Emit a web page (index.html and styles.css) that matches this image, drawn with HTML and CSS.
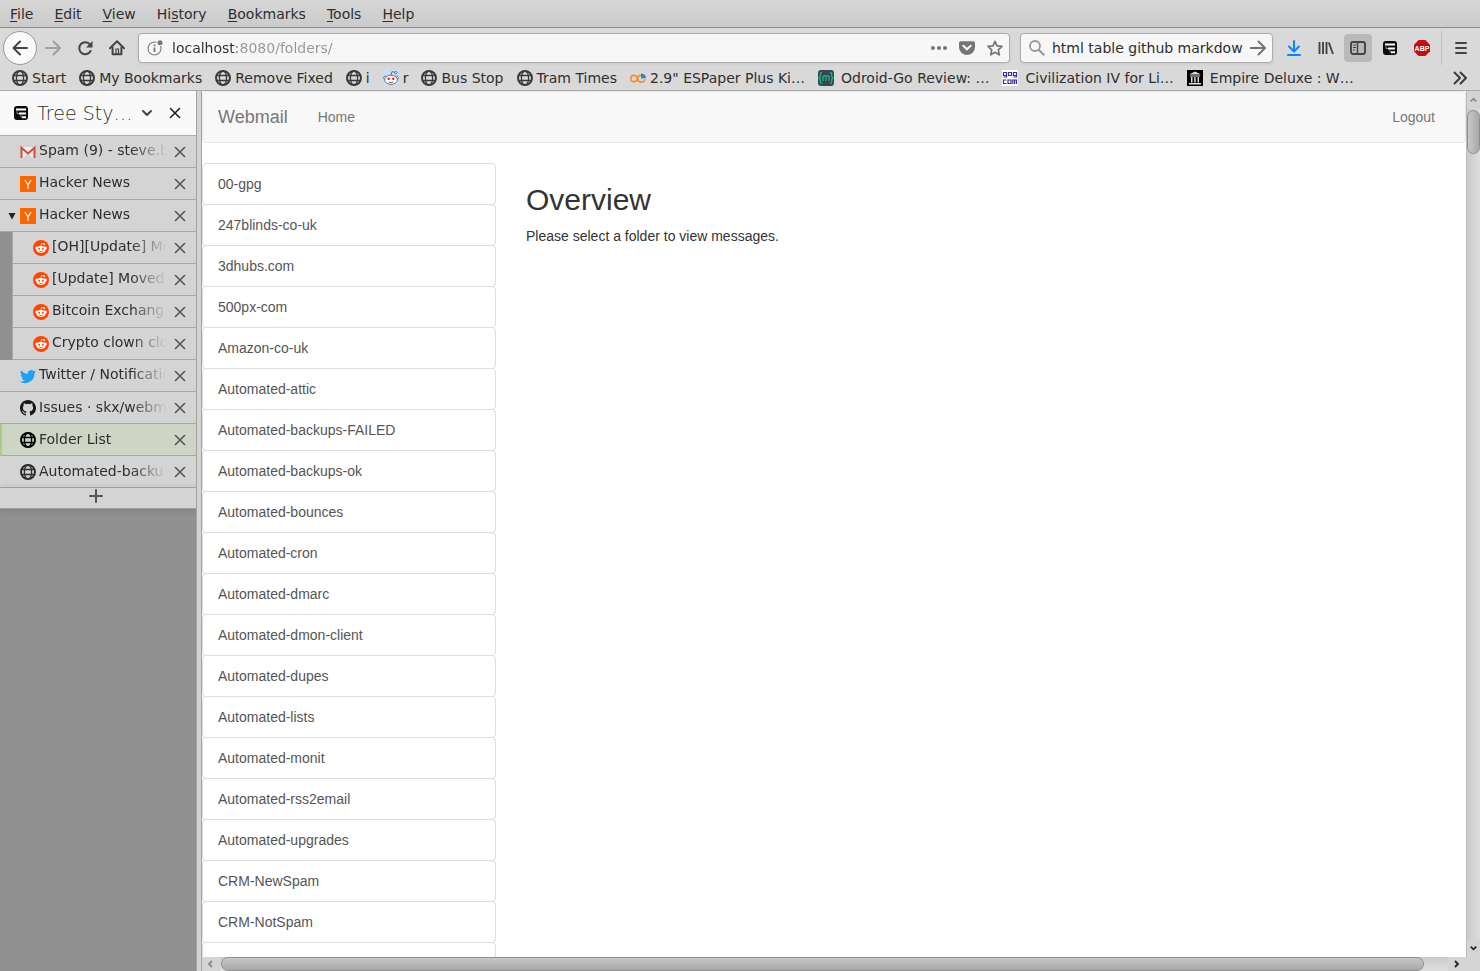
FILE: index.html
```html
<!DOCTYPE html>
<html lang="en">
<head>
<meta charset="utf-8">
<title>Folder List</title>
<link rel="stylesheet" href="styles.css">
</head>
<body>
<svg class="defs" aria-hidden="true">
  <symbol id="globe" viewBox="0 0 16 16"><g fill="none" stroke="currentColor"><circle cx="8" cy="8" r="7" stroke-width="2"/><ellipse cx="8" cy="8" rx="3.6" ry="7" stroke-width="1.3"/><path d="M1 5.5h14M1 10.5h14" stroke-width="1.3"/></g></symbol>
  <symbol id="close" viewBox="0 0 16 16"><path d="M3.5 3.500l9 9m0-9l-9 9" stroke="currentColor" stroke-width="1.600" stroke-linecap="round"/></symbol>
  <symbol id="hn" viewBox="0 0 16 16"><path fill="#f60" d="M0 0h16v16H0z"/><path d="M5 4l3 4.800L11 4M8 8.500V13" fill="none" stroke="#fff" stroke-width="1.200"/></symbol>
  <symbol id="reddit" viewBox="0 0 16 16"><circle cx="8" cy="8" r="8" fill="#ff4500"/><ellipse cx="8" cy="9.400" rx="4.600" ry="3.300" fill="#fff"/><circle cx="3.500" cy="7.900" r="1.300" fill="#fff"/><circle cx="12.500" cy="7.900" r="1.300" fill="#fff"/><path d="M8 6.400l.7-3 2.200.5" fill="none" stroke="#fff" stroke-width=".8"/><circle cx="11.200" cy="4" r="1" fill="#fff"/><circle cx="6.200" cy="8.700" r=".95" fill="#ff4500"/><circle cx="9.800" cy="8.700" r=".95" fill="#ff4500"/><path d="M6 10.900q2 1.300 4 0" stroke="#ff4500" stroke-width=".7" fill="none"/></symbol>
  <symbol id="tst" viewBox="0 0 16 16"><rect x="1" y="1" width="14" height="14" rx="3" fill="#0a0a0a"/><path d="M3 3.500h10v2H3zM6 7.500h7v2H6zM9 11.200h4v2H9z" fill="#fff"/><path d="M4 6v2.600h2M8 9.500V12h1" fill="none" stroke="#bbb" stroke-width=".7"/></symbol>
</svg>

<header class="chrome">
  <nav class="menubar" aria-label="Menu bar">
    <button><u>F</u>ile</button><button><u>E</u>dit</button><button><u>V</u>iew</button><button>Hi<u>s</u>tory</button><button><u>B</u>ookmarks</button><button><u>T</u>ools</button><button><u>H</u>elp</button>
  </nav>
  <div class="toolbar">
    <button class="tool back" aria-label="Back"><svg class="ico" viewBox="0 0 16 16"><path d="M8 1.500L1.500 8 8 14.500M2 8h13" class="line"/></svg></button>
    <button class="tool dim" aria-label="Forward"><svg class="ico" viewBox="0 0 16 16"><path d="M8.500 1.500L15 8l-6.500 6.500M14 8H1" class="line"/></svg></button>
    <button class="tool" aria-label="Reload"><svg class="ico" viewBox="0 0 16 16"><path d="M13 4.500A6 6 0 1 0 13.600 11" class="line"/><path d="M15.500 1v6.500H9z" fill="currentColor"/></svg></button>
    <button class="tool" aria-label="Home"><svg class="ico" viewBox="0 0 16 16"><path d="M1 8.200L8 1.300l7 6.900" class="line"/><path d="M3.600 7.500v6.700h8.800V7.500" class="line"/><path d="M7 9h2.500v5H7z" fill="none" stroke="currentColor" stroke-width="1.200"/></svg></button>
    <div class="field url">
      <svg class="ico info" viewBox="0 0 16 16"><circle cx="7.500" cy="8.500" r="6.500" fill="none" stroke="currentColor" stroke-width="1.100"/><path d="M7.500 7.500v4.500M7.500 4.500v1.800" stroke="currentColor" stroke-width="1.800"/><circle cx="13" cy="2.700" r="3.600" fill="#f7f7f7"/><circle cx="13" cy="2.700" r="2.500" fill="currentColor"/></svg>
      <input class="address" type="text" aria-label="Address" value="localhost:8080/folders/">
      <button class="inner" aria-label="Page actions"><svg class="ico" viewBox="0 0 16 16"><g fill="currentColor"><circle cx="2" cy="8" r="2"/><circle cx="8" cy="8" r="2"/><circle cx="14" cy="8" r="2"/></g></svg></button>
      <button class="inner" aria-label="Save to Pocket"><svg class="ico" viewBox="0 0 16 16"><path d="M1.500 1.200h13q1.500 0 1.500 1.500V7A8 8 0 0 1 0 7V2.700q0-1.500 1.500-1.500z" fill="currentColor"/><path d="M4.300 5.800L8 9.300l3.700-3.500" fill="none" stroke="#f7f7f7" stroke-width="2" stroke-linecap="round"/></svg></button>
      <button class="inner" aria-label="Bookmark this page"><svg class="ico" viewBox="0 0 16 16"><path d="M8 1.300l2 4.600 5 .5-3.700 3.400 1 5L8 12.300 3.700 14.800l1-5L1 6.400l5-.5z" fill="none" stroke="currentColor" stroke-width="1.700" stroke-linejoin="round"/></svg></button>
    </div>
    <div class="field search">
      <svg class="ico" viewBox="0 0 16 16"><circle cx="6" cy="6" r="5" fill="none" stroke="#999" stroke-width="1.800"/><path d="M9.700 9.700l5.500 5.500" stroke="#999" stroke-width="2.200"/></svg>
      <input type="text" aria-label="Search" value="html table github markdow">
      <button class="inner go" aria-label="Search"><svg class="ico" viewBox="0 0 16 16"><path d="M8.500 1.500L15 8l-6.500 6.500M14.500 8H0" class="line"/></svg></button>
    </div>
    <div class="tools">
      <button class="tool blue" aria-label="Downloads"><svg class="ico" viewBox="0 0 16 16"><path d="M8 1v10M3 6.500l5 5 5-5M2 15h12" class="line"/></svg></button>
      <button class="tool" aria-label="Library"><svg class="ico" viewBox="0 0 16 16"><path d="M1.500 2v12M5 2v12M8.500 2v12M10.800 2.500L15 14" fill="none" stroke="currentColor" stroke-width="1.900"/></svg></button>
      <button class="tool" aria-label="Sidebars"><span class="pressed"><svg class="ico" viewBox="0 0 16 16"><rect x="1" y="2" width="14" height="12" rx="2" fill="none" stroke="currentColor" stroke-width="1.900"/><path d="M7.500 2v12" stroke="currentColor" stroke-width="1.500"/><path d="M3 5h3M3 7.500h3M3 10h2" stroke="currentColor"/></svg></span></button>
      <button class="tool" aria-label="Tree Style Tab"><svg class="ico"><use href="#tst"/></svg></button>
      <button class="tool" aria-label="Adblock Plus"><svg class="ico" viewBox="0 0 16 16"><path d="M4.700 0h6.600L16 4.700v6.600L11.300 16H4.700L0 11.300V4.700z" fill="#c70d0d"/><text x="8" y="10.500" class="abp">ABP</text></svg></button>
    </div>
    <button class="tool menu" aria-label="Open menu"><svg class="ico" viewBox="0 0 16 16"><path d="M3 3h10M3 8h10M3 13h10" class="line"/></svg></button>
  </div>
  <nav class="bookmarks" aria-label="Bookmarks">
    <a href="#"><svg class="ico"><use href="#globe"/></svg>Start</a>
    <a href="#"><svg class="ico"><use href="#globe"/></svg>My Bookmarks</a>
    <a href="#"><svg class="ico"><use href="#globe"/></svg>Remove Fixed</a>
    <a href="#"><svg class="ico"><use href="#globe"/></svg>i</a>
    <a href="#"><svg class="ico" viewBox="0 0 16 16"><path fill="#c5e0fa" d="M0 0h16v16H0z"/><g fill="#fff" stroke="#555" stroke-width=".8"><circle cx="2.300" cy="7.800" r="1.700"/><circle cx="13.700" cy="7.800" r="1.700"/><path d="M8 5.500l1-4 3.200 1" fill="none"/><circle cx="12.800" cy="2.700" r="1.200"/><ellipse cx="8" cy="9.800" rx="6.300" ry="4.600"/></g><circle cx="5.700" cy="8.800" r="1.300" fill="#f22"/><circle cx="10.300" cy="8.800" r="1.300" fill="#f22"/><path d="M5.500 12q2.500 1.500 5 0" fill="none" stroke="#444" stroke-width=".8"/></svg>r</a>
    <a href="#"><svg class="ico"><use href="#globe"/></svg>Bus Stop</a>
    <a href="#"><svg class="ico"><use href="#globe"/></svg>Tram Times</a>
    <a href="#"><svg class="ico" viewBox="0 0 16 16"><g fill="none" stroke="#f39034" stroke-width="1.700"><circle cx="4" cy="8.500" r="3.200"/><path d="M11 5.200a3.500 3.500 0 1 0 3.800 4"/></g><path d="M11 8.500V3.500a5 5 0 0 1 5 4.500z" fill="#2389c9"/></svg>2.9" ESPaper Plus Ki…</a>
    <a href="#" class="wide"><svg class="ico" viewBox="0 0 16 16"><rect width="16" height="16" rx="3" fill="#3b4558"/><g fill="none" stroke="#19b67c" stroke-width="1.300"><path d="M4 2.500q-1.700 0-1.700 1.700v2.300L1 8l1.300 1.500v2.300q0 1.700 1.700 1.700M12 2.500q1.700 0 1.700 1.700v2.300L15 8l-1.300 1.500v2.300q0 1.700-1.700 1.700M5 11V6.500q1.500-1.500 3 0V11M8 6.500q1.500-1.500 3 0V11"/></g></svg>Odroid-Go Review: …</a>
    <a href="#" class="wide"><svg class="ico" viewBox="0 0 16 16"><path fill="#fff" d="M0 0h16v16H0z"/><path d="M4.500 5.500h-3v-3h3v4.500h-3M9.500 2.500v3h-3v-3zM14.500 5.500h-3v-3h3v4.500h-3M4.500 10h-3v3.500h3M9 10v3.500H6V10zM10.800 14v-4h3.700v4M12.600 10v4" fill="none" stroke="#45279b" stroke-width="1.200"/></svg>Civilization IV for Li…</a>
    <a href="#" class="wide"><svg class="ico" viewBox="0 0 16 16"><path d="M0 0h16v16H0z"/><path d="M2 4.500L8 1.500l6 3zM3 5.500h10v1H3zM4 7h1.500v5.500H4zM7.200 7h1.500v5.500H7.200zM10.500 7H12v5.500h-1.500zM2 13h12v1.500H2z" fill="#ddd"/></svg>Empire Deluxe : W…</a>
    <button class="more" aria-label="More bookmarks"><svg class="ico" viewBox="0 0 16 16"><path d="M2.500 2.500L8 8l-5.500 5.500M8.500 2.500L14 8l-5.500 5.500" class="line"/></svg></button>
  </nav>
</header>

<div class="main">
  <aside class="sidebar">
    <div class="sidehead">
      <svg class="ico"><use href="#tst"/></svg>
      <button class="title">Tree Sty…</button>
      <svg class="ico chev" viewBox="0 0 16 16"><path d="M4 6l4 4 4-4" class="line"/></svg>
      <button class="x dark" aria-label="Close sidebar"><svg class="ico"><use href="#close"/></svg></button>
    </div>
    <ul class="tabs">
      <li><svg class="ico" viewBox="0 0 16 16"><path d="M1 3h14v11H1z" fill="#eee"/><path d="M3 14l5-5 5 5z" fill="#d5d5d5"/><path d="M1.500 14V3.800L8 9.500l6.500-5.700V14" fill="none" stroke="#d54b3d" stroke-width="2"/></svg><a href="#">Spam (9) - steve.b</a><button class="x" aria-label="Close tab"><svg class="ico"><use href="#close"/></svg></button></li>
      <li><svg class="ico"><use href="#hn"/></svg><a href="#">Hacker News</a><button class="x" aria-label="Close tab"><svg class="ico"><use href="#close"/></svg></button></li>
      <li><button class="twisty" aria-label="Collapse tree"><svg viewBox="0 0 8 8"><path d="M.5 1h7L4 7.500z" fill="#222"/></svg></button><svg class="ico"><use href="#hn"/></svg><a href="#">Hacker News</a><button class="x" aria-label="Close tab"><svg class="ico"><use href="#close"/></svg></button></li>
      <li class="child"><svg class="ico"><use href="#reddit"/></svg><a href="#">[OH][Update] Mo</a><button class="x" aria-label="Close tab"><svg class="ico"><use href="#close"/></svg></button></li>
      <li class="child"><svg class="ico"><use href="#reddit"/></svg><a href="#">[Update] Moved</a><button class="x" aria-label="Close tab"><svg class="ico"><use href="#close"/></svg></button></li>
      <li class="child"><svg class="ico"><use href="#reddit"/></svg><a href="#">Bitcoin Exchang</a><button class="x" aria-label="Close tab"><svg class="ico"><use href="#close"/></svg></button></li>
      <li class="child"><svg class="ico"><use href="#reddit"/></svg><a href="#">Crypto clown clo</a><button class="x" aria-label="Close tab"><svg class="ico"><use href="#close"/></svg></button></li>
      <li><svg class="ico" viewBox="0 0 16 16"><path fill="#1da1f2" d="M16 3.500a6.600 6.600 0 0 1-1.900.5 3.300 3.300 0 0 0 1.400-1.800 6.600 6.600 0 0 1-2.100.8 3.300 3.300 0 0 0-5.600 3A9.300 9.300 0 0 1 1.100 2.600a3.300 3.300 0 0 0 1 4.400 3.300 3.300 0 0 1-1.500-.4 3.300 3.300 0 0 0 2.700 3.200 3.300 3.300 0 0 1-1.500.1 3.300 3.300 0 0 0 3.100 2.300A6.600 6.600 0 0 1 0 13.500a9.300 9.300 0 0 0 14.400-8.300A6.700 6.700 0 0 0 16 3.500z"/></svg><a href="#">Twitter / Notificatio</a><button class="x" aria-label="Close tab"><svg class="ico"><use href="#close"/></svg></button></li>
      <li class="low"><svg class="ico" viewBox="0 0 16 16"><path fill="#191717" d="M8 0C3.580 0 0 3.580 0 8c0 3.540 2.290 6.530 5.470 7.590.4.070.55-.17.55-.38 0-.19-.01-.82-.01-1.490-2.010.37-2.530-.49-2.690-.94-.09-.23-.48-.94-.82-1.130-.28-.15-.68-.52-.01-.53.63-.01 1.080.58 1.230.82.72 1.210 1.870.87 2.330.66.07-.52.28-.87.51-1.070-1.780-.2-3.640-.89-3.640-3.950 0-.87.31-1.590.82-2.150-.08-.2-.36-1.020.08-2.120 0 0 .67-.21 2.200.82a7.500 7.500 0 0 1 4 0c1.530-1.040 2.200-.82 2.200-.82.44 1.100.16 1.920.08 2.120.51.56.82 1.270.82 2.150 0 3.070-1.870 3.750-3.650 3.950.29.25.54.73.54 1.480 0 1.070-.01 1.930-.01 2.200 0 .21.15.46.55.38A8 8 0 0 0 8 0z"/></svg><a href="#">Issues · skx/webma</a><button class="x" aria-label="Close tab"><svg class="ico"><use href="#close"/></svg></button></li>
      <li class="low active"><svg class="ico black"><use href="#globe"/></svg><a href="#">Folder List</a><button class="x" aria-label="Close tab"><svg class="ico"><use href="#close"/></svg></button></li>
      <li class="low"><svg class="ico"><use href="#globe"/></svg><a href="#">Automated-backu</a><button class="x" aria-label="Close tab"><svg class="ico"><use href="#close"/></svg></button></li>
    </ul>
    <button class="newtab" aria-label="New tab"><svg class="ico" viewBox="0 0 16 16"><path d="M8 2v12M2 8h12" class="line"/></svg></button>
  </aside>
  <div class="splitter"></div>
  <div class="view">
    <div class="page">
      <nav class="navbar">
        <a href="#" class="brand">Webmail</a><a href="#">Home</a><a href="#" class="logout">Logout</a>
      </nav>
      <div class="row">
        <div class="folders">
          <a href="#">00-gpg</a><a href="#">247blinds-co-uk</a><a href="#">3dhubs.com</a><a href="#">500px-com</a><a href="#">Amazon-co-uk</a><a href="#">Automated-attic</a><a href="#">Automated-backups-FAILED</a><a href="#">Automated-backups-ok</a><a href="#">Automated-bounces</a><a href="#">Automated-cron</a><a href="#">Automated-dmarc</a><a href="#">Automated-dmon-client</a><a href="#">Automated-dupes</a><a href="#">Automated-lists</a><a href="#">Automated-monit</a><a href="#">Automated-rss2email</a><a href="#">Automated-upgrades</a><a href="#">CRM-NewSpam</a><a href="#">CRM-NotSpam</a><a href="#" aria-label="Next folder"></a>
        </div>
        <main>
          <h1>Overview</h1>
          <p>Please select a folder to view messages.</p>
        </main>
      </div>
    </div>
    <div class="vbar">
      <svg class="arrow off" viewBox="0 0 14 16"><path d="M4 9.500L7 6.500l3 3"/></svg>
      <div class="track"><div class="thumb"></div></div>
      <svg class="arrow" viewBox="0 0 14 16"><path d="M4 6.500l3 3 3-3"/></svg>
    </div>
    <div class="hbar">
      <svg class="arrow off" viewBox="0 0 18 14"><path d="M10 4L7 7l3 3"/></svg>
      <div class="track"><div class="thumb"></div></div>
      <svg class="arrow" viewBox="0 0 18 14"><path d="M7 4l3 3-3 3"/></svg>
    </div>
    <div class="corner"></div>
  </div>
</div>
</body>
</html>
```

FILE: styles.css
```css
* { box-sizing: border-box; }

body {
  margin: 0;
  height: 100vh;
  display: flex;
  flex-direction: column;
  overflow: hidden;
  background: #d9d9d9;
  color: #2e2e2e;
  font: 14px/20px "DejaVu Sans", sans-serif;
}

a { color: inherit; text-decoration: none; }

button, input {
  margin: 0;
  padding: 0;
  border: 0;
  background: none;
  color: inherit;
  font: inherit;
}

.defs { position: absolute; width: 0; height: 0; }
.ico { display: block; flex: none; width: 16px; height: 16px; }
.line { fill: none; stroke: currentColor; stroke-width: 2; stroke-linecap: round; stroke-linejoin: round; }

/* Menu bar */
.menubar {
  display: flex;
  gap: 21px;
  height: 28px;
  padding: 0 10px;
  border-bottom: 1px solid #8c8c8c;
  background: linear-gradient(#d6d6d6, #cbcbcb);
}
.menubar u { text-underline-offset: 2px; }

/* Toolbar */
.toolbar {
  display: flex;
  align-items: center;
  height: 40px;
  padding: 0 3px;
}
.tool {
  display: flex;
  align-items: center;
  justify-content: center;
  width: 32px;
  height: 32px;
  color: #444;
}
.back {
  width: 34px;
  height: 34px;
  border: 1px solid #999;
  border-radius: 50%;
  background: #f9f9f9;
}
.dim { color: #a0a0a0; }
.blue { color: #0a84ff; }
.tools { display: flex; margin: 0 3px 0 5px; }
.pressed { padding: 6px; border-radius: 4px; background: #bababa; }
.abp { fill: #fff; font: bold 7px "Liberation Sans", sans-serif; text-anchor: middle; }
.menu { width: 36px; height: 34px; padding-left: 3px; border-left: 1px solid #bfbfbf; }

.field {
  display: flex;
  align-items: center;
  height: 30px;
  border: 1px solid #adadad;
  border-radius: 4px;
  background: #f7f7f7;
  box-shadow: 0 1px 3px rgba(0, 0, 0, .08);
}
.field input { flex: 1; min-width: 0; outline: 0; }
.url { flex: 1; margin: 0 10px 0 5px; padding: 0 0 0 8px; }
.info { margin-right: 9px; color: #777; }
.field .address {
  color: transparent;
  background: linear-gradient(90deg, #2e2e2e 65px, #959595 65px);
  -webkit-background-clip: text;
  background-clip: text;
}
.inner { display: flex; justify-content: center; width: 28px; color: #757575; }
.search { width: 253px; padding: 0 6px 0 8px; }
.search input { margin-left: 7px; }
.search .go { width: 16px; margin-left: 4px; }

/* Bookmarks */
.bookmarks {
  display: flex;
  gap: 13px;
  height: 23px;
  padding: 0 12px;
  border-bottom: 1px solid #ababab;
  white-space: nowrap;
}
.bookmarks a { display: flex; gap: 4px; align-items: center; height: 20px; }
.bookmarks .wide { gap: 7px; }
.bookmarks .ico { color: #3b3b3b; }
.bookmarks .more { height: 20px; margin-left: auto; }

/* Sidebar */
.main { flex: 1; min-height: 0; display: flex; }
.sidebar { width: 196px; background: #919191; }
.sidehead {
  display: flex;
  align-items: center;
  height: 45px;
  padding: 0 13px;
  border-bottom: 1px solid #adadad;
  background: #f9f9f9;
}
.sidehead .title {
  margin: 0 7px 0 8px;
  font-size: 19px;
  font-weight: 200;
  line-height: 30px;
}
.chev { color: #444; }
.x { width: 16px; color: #555; }
.sidehead .dark { margin-left: auto; color: #222; }

.tabs { margin: 0; padding: 0; list-style: none; }
.tabs li {
  display: flex;
  align-items: center;
  gap: 3px;
  height: 32px;
  padding: 1px 8px 0 20px;
  border-bottom: 1px solid #a8a8a8;
  background: #d4d4d4;
}
.tabs a {
  flex: 1;
  height: 24px;
  overflow: hidden;
  margin-right: 2px;
  white-space: nowrap;
  -webkit-mask-image: linear-gradient(90deg, #000 calc(100% - 36px), transparent);
  mask-image: linear-gradient(90deg, #000 calc(100% - 36px), transparent);
}
.tabs .low a { height: 22px; }
.tabs .child { margin-left: 12px; border-left: 1px solid #a8a8a8; }
.tabs .active { padding-left: 18px; border-left: 2px solid #a9cc87; background: #ced5c4; }
.black { color: #000; }
.tabs .twisty { width: 8px; margin: 0 1px 0 -12px; }
.twisty svg { display: block; width: 8px; height: 8px; }
.newtab {
  display: flex;
  justify-content: center;
  width: 100%;
  height: 21px;
  padding-right: 4px;
  border-bottom: 1px solid #a0a0a0;
  background: #d4d4d4;
  box-shadow: 0 1px 8px rgba(0, 0, 0, .15);
  color: #555;
}
.splitter { width: 6px; border: solid #a3a3a3; border-width: 0 1px; background: #d4d4d4; }

/* Page */
.view {
  flex: 1;
  min-width: 0;
  display: grid;
  grid-template: minmax(0, 1fr) 14px / minmax(0, 1fr) 14px;
}
.page {
  overflow: hidden;
  background: #fff;
  color: #333;
  font: 14px/20px "Liberation Sans", Arial, sans-serif;
}
.navbar {
  display: flex;
  align-items: center;
  gap: 30px;
  height: 52px;
  margin-bottom: 20px;
  padding: 0 30px 0 15px;
  border: 1px solid #e7e7e7;
  border-radius: 4px;
  background: #f8f8f8;
  color: #777;
}
.brand { font-size: 18px; }
.logout { margin-left: auto; }
.row { display: grid; grid-template-columns: calc(25% - 22px) 1fr; gap: 30px; }
.folders a {
  display: block;
  min-height: 42px;
  margin-bottom: -1px;
  padding: 10px 15px;
  border: 1px solid #ddd;
  border-radius: 4px;
  color: #555;
}
h1 { margin: 20px 0 10px; font-size: 30px; font-weight: 500; line-height: 33px; }
p { margin: 0 0 10px; }

/* Scroll bars */
.vbar, .hbar { display: flex; background: #d4d4d4; }
.vbar { flex-direction: column; border-left: 1px solid #bbb; }
.track { flex: 1; background: linear-gradient(90deg, #c9c9c9, #dedede); }
.hbar .track { background: linear-gradient(#c9c9c9, #dedede); }
.thumb { border: 1px solid #8f8f8f; border-radius: 7px; }
.vbar .thumb { height: 44px; margin-top: 1px; background: linear-gradient(90deg, #c8c8c8, #a8a8a8); }
.hbar .thumb { width: 98%; height: 14px; margin-left: 1px; background: linear-gradient(#c8c8c8, #a8a8a8); }
.arrow { flex: none; width: 18px; height: 14px; fill: none; stroke: #222; stroke-width: 1.800; }
.vbar .arrow { width: 13px; height: 18px; }
.vbar .track { display: flow-root; }
.off { stroke: #888; }
.corner { background: #d4d4d4; }
```
